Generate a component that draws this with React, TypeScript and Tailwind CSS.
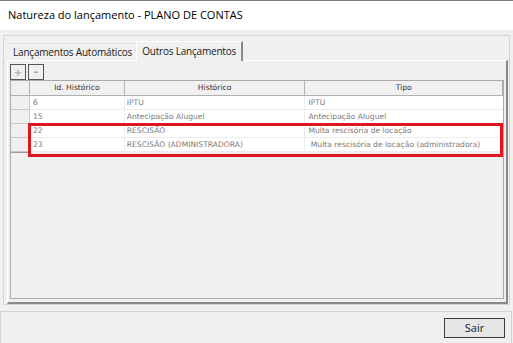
import React from "react";

type Row = {
  id: string;
  historico: string;
  tipo: string;
};

const rows: Row[] = [
  { id: "6", historico: "IPTU", tipo: "IPTU" },
  { id: "15", historico: "Antecipação Aluguel", tipo: "Antecipação Aluguel" },
  { id: "22", historico: "RESCISÃO", tipo: "Multa rescisória de locação" },
  {
    id: "23",
    historico: "RESCISÃO (ADMINISTRADORA)",
    tipo: "\u00a0Multa rescisória de locação (administradora)",
  },
];

export default function App() {
  return (
    <div
      className="w-[513px] h-[343px] bg-[#f0f0f0] flex flex-col overflow-hidden border-t border-[#7a7a7a] text-[#000]"
      style={{ fontFamily: '"Open Sans", "Noto Sans", sans-serif' }}
    >
      {/* Title */}
      <div className="h-[29px] bg-white flex items-center pl-[8px] text-[11px] shrink-0">
        Natureza do lançamento - PLANO DE CONTAS
      </div>

      {/* Page control */}
      <div className="pt-[5px] pl-[3px] pr-[3px] shrink-0">
        <div className="h-[270px] border border-[#d4d4d4] flex flex-col pl-[3px] pr-[1px]">
          {/* Tabs */}
          <div className="h-[24px] flex items-end shrink-0">
            <div className="h-[17px] border-t border-[#e3e3e3] pl-[6px] pr-[4px] flex items-center text-[10px] text-[#1a1a1a] tracking-[-0.2px]">
              Lançamentos Automáticos
            </div>
            <div className="h-[20px] -mb-[1px] bg-[#f0f0f0] border-t border-l border-white border-r-2 border-r-[#8a8a8a] pl-[5px] pr-[5px] flex items-center text-[10px] text-[#1a1a1a] tracking-[-0.2px] relative z-10">
              Outros Lançamentos
            </div>
          </div>

          {/* Sheet */}
          <div className="flex-1 border-t border-l border-white border-r-2 border-r-[#8a8a8a] border-b-2 border-b-[#8a8a8a] flex flex-col pl-[2px] pr-[2px] pb-[3px]">
            <div className="flex gap-[2px] pt-[3px] shrink-0">
              <div className="w-[16px] h-[16px] border border-[#555] flex items-center justify-center text-[13px] font-bold leading-none text-[#b5b5b5]">
                +
              </div>
              <div className="w-[16px] h-[16px] border border-[#555] flex items-center justify-center text-[12px] font-bold leading-none text-[#a0a0a0]">
                -
              </div>
            </div>

            {/* Grid */}
            <div
              className="flex-1 border border-[#a9a9a9] relative text-[7.6px]"
              style={{ fontFamily: '"DejaVu Sans", "Noto Sans", sans-serif' }}
            >
              <div className="flex h-[15px] text-[#333]">
                <div className="w-[19px] border-r border-b border-[#b0b0b0]" />
                <div className="w-[95px] border-r border-b border-[#b0b0b0] flex items-center justify-center">
                  Id. Histórico
                </div>
                <div className="w-[181px] border-r border-b border-[#b0b0b0] flex items-center justify-center">
                  Histórico
                </div>
                <div className="w-[198px] border-r border-b border-[#b0b0b0] flex items-center justify-center">
                  Tipo
                </div>
              </div>
              {rows.map((r) => (
                <div key={r.id} className="flex h-[14px] text-[#7a7a7a]">
                  <div className="w-[19px] border-r border-b border-[#c8c8c8] bg-[#f0f0f0]" />
                  <div className="w-[95px] bg-white border-r border-b border-[#ececec] flex items-center pl-[3px]">
                    {r.id}
                  </div>
                  <div className="w-[181px] bg-white border-r border-b border-[#ececec] flex items-center pl-[2px]">
                    {r.historico}
                  </div>
                  <div className="w-[198px] bg-white border-b border-[#ececec] flex items-center pl-[3px]">
                    {r.tipo}
                  </div>
                </div>
              ))}
              <div className="w-[19px] border-b border-[#9a9a9a] h-0" />

              {/* highlight */}
              <div className="absolute left-[17px] top-[42px] w-[475px] h-[34px] border-[3px] border-[#e0161e]" />
            </div>
          </div>
        </div>
      </div>

      {/* Footer */}
      <div className="mt-[6px] flex-1 border-t border-l border-[#d4d4d4] border-r border-r-[#d4d4d4] mr-[1px] flex items-start justify-end pt-[6px] pr-[6px]">
        <button className="w-[61px] h-[20px] border border-[#3c3c3c] bg-[#e6e6e6] text-[11px] text-[#1a1a1a] flex items-center justify-center">
          Sair
        </button>
      </div>
    </div>
  );
}
